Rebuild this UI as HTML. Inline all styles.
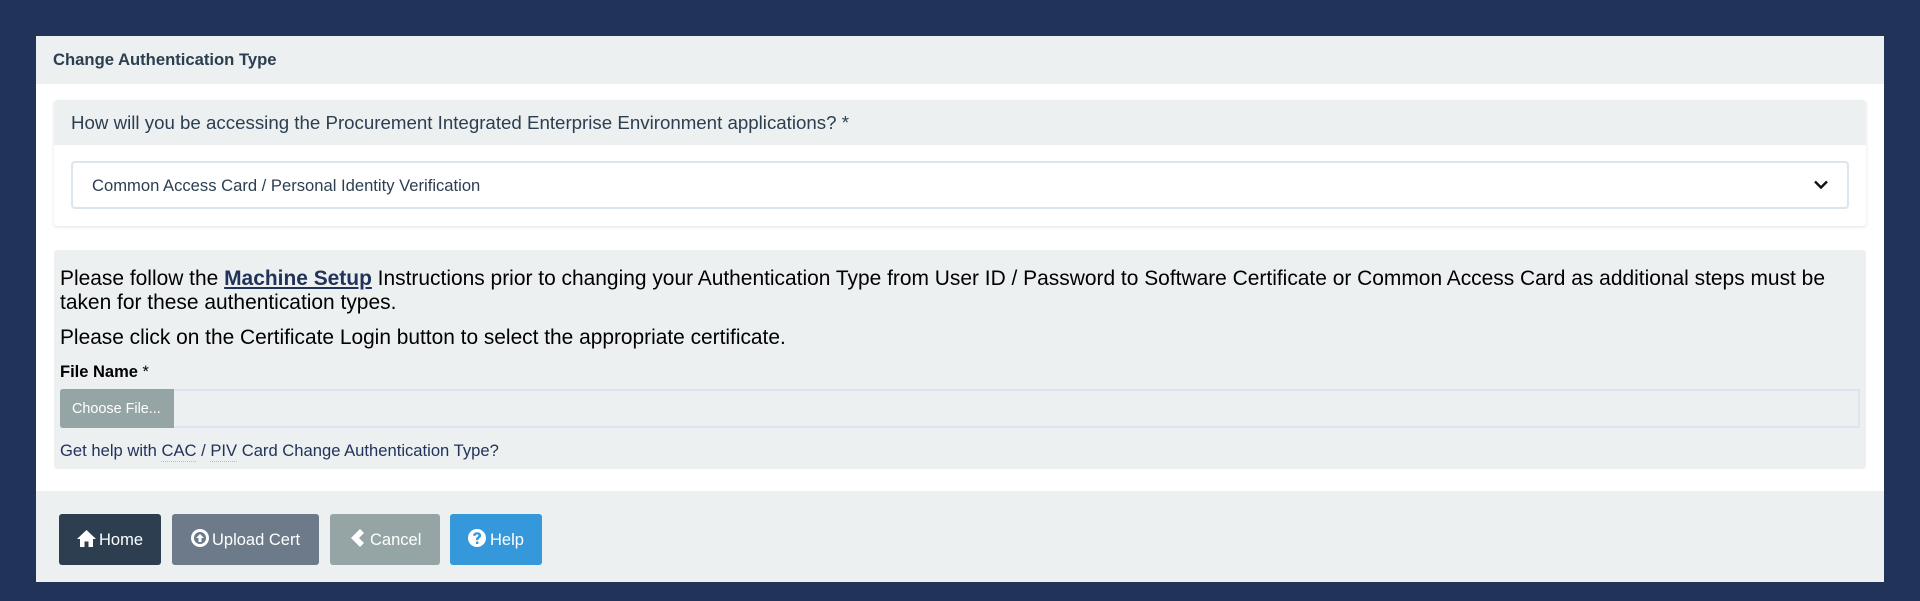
<!DOCTYPE html>
<html><head><meta charset="utf-8">
<style>
html,body{margin:0;padding:0;width:1920px;height:601px;overflow:hidden;background:#22335a;font-family:"Liberation Sans",sans-serif}
div,a,svg,span.t{position:absolute;box-sizing:border-box}
.t{white-space:nowrap;line-height:1}
.btn{top:514px;height:51px;border-radius:3px;color:#fff;font-size:16.5px}
.btn svg{fill:#fff}
.btn .t{top:17.5px}
abbr{text-decoration:underline dotted #b4bbca 1px;text-underline-offset:5px}
</style></head>
<body>
<div style="left:36px;top:36px;width:1848px;height:546px;background:#fff;border-radius:2px"></div>
<div style="left:36px;top:36px;width:1848px;height:48px;background:#ecf0f1"></div>
<span class="t" style="left:53px;top:51.5px;font-size:16.64px;font-weight:bold;color:#2c3e50">Change Authentication Type</span>

<div style="left:54px;top:100px;width:1812px;height:126px;background:#fff;border-radius:3px;box-shadow:0 1px 3px rgba(0,0,0,.12)"></div>
<div style="left:54px;top:100px;width:1812px;height:45px;background:#ecf0f1;border-radius:3px 3px 0 0"></div>
<span class="t" style="left:71px;top:114px;font-size:18.7px;color:#2c3e50">How will you be accessing the Procurement Integrated Enterprise Environment applications? *</span>
<div style="left:71px;top:161px;width:1778px;height:48px;background:#fff;border:2px solid #dce4ec;border-radius:4px"></div>
<span class="t" style="left:92px;top:177.5px;font-size:16.6px;color:#2c3e50">Common Access Card / Personal Identity Verification</span>
<svg style="left:1812px;top:179px" width="18" height="12" viewBox="0 0 18 12"><path d="M3 2.5 L9 8.5 L15 2.5" fill="none" stroke="#111" stroke-width="2.4"/></svg>

<div style="left:54px;top:250px;width:1812px;height:219px;background:#ecf0f1;border-radius:3px"></div>
<span class="t" style="left:60px;top:269px;font-size:20.95px;color:#000">Please follow the <a style="position:static;color:#22335a;font-weight:bold;text-decoration:underline">Machine Setup</a> Instructions prior to changing your Authentication Type from User ID / Password to Software Certificate or Common Access Card as additional steps must be</span>
<span class="t" style="left:60px;top:293px;font-size:20.95px;color:#000">taken for these authentication types.</span>
<span class="t" style="left:60px;top:328px;font-size:20.9px;color:#000">Please click on the Certificate Login button to select the appropriate certificate.</span>
<span class="t" style="left:60px;top:363.5px;font-size:16.5px;color:#000"><b>File Name</b> *</span>
<div style="left:60px;top:389px;width:1800px;height:39px;border:2px solid #dde4f0"></div>
<div style="left:60px;top:389px;width:114px;height:39px;background:#95a5a6;border-radius:3px 0 0 3px"></div>
<span class="t" style="left:72px;top:402px;font-size:14.4px;color:#fff">Choose File...</span>
<span class="t" style="left:60px;top:443px;font-size:16.6px;color:#22335a">Get help with <abbr>CAC</abbr> / <abbr>PIV</abbr> Card Change Authentication Type?</span>

<div style="left:36px;top:491px;width:1848px;height:91px;background:#ecf0f1"></div>

<div class="btn" style="left:59px;width:102px;background:#2c3e50">
<svg style="left:18px;top:15px" width="19" height="19" viewBox="0 0 19 19"><path d="M9.5 1 L19 10 H16 V18 H11.5 V12.5 H7.5 V18 H3 V10 H0 Z"/></svg>
<span class="t" style="left:40px">Home</span></div>

<div class="btn" style="left:172px;width:147px;background:#6c7a89">
<svg style="left:19px;top:15px" width="18" height="18" viewBox="0 0 18 18"><path fill-rule="evenodd" d="M9 0a9 9 0 1 0 0 18A9 9 0 0 0 9 0zm0 3a6 6 0 1 1 0 12A6 6 0 0 1 9 3zM9 5 L5 9 H7.5 V13 H10.5 V9 H13 Z"/></svg>
<span class="t" style="left:40px">Upload Cert</span></div>

<div class="btn" style="left:330px;width:110px;background:#95a5a6">
<svg style="left:21px;top:15px" width="13" height="18" viewBox="0 0 13 18"><path d="M9 0 L13 4 L8 9 L13 14 L9 18 L0 9 Z"/></svg>
<span class="t" style="left:40px">Cancel</span></div>

<div class="btn" style="left:450px;width:92px;background:#3498db">
<svg style="left:18px;top:15px" width="18" height="18" viewBox="0 0 18 18"><path fill-rule="evenodd" d="M9 0a9 9 0 1 0 0 18A9 9 0 0 0 9 0zM8 12.5h2.4V15H8zM5 6.8C5.2 4.6 6.8 3.2 9.2 3.2c2.3 0 3.9 1.3 3.9 3.2 0 1.4-.8 2.2-1.7 2.9-.7.5-1 .9-1 1.8H8v-.6c0-1.2.5-1.9 1.3-2.5.7-.5 1.2-.9 1.2-1.5 0-.7-.5-1.1-1.3-1.1-.9 0-1.4.5-1.6 1.4z"/></svg>
<span class="t" style="left:40px">Help</span></div>
</body></html>
